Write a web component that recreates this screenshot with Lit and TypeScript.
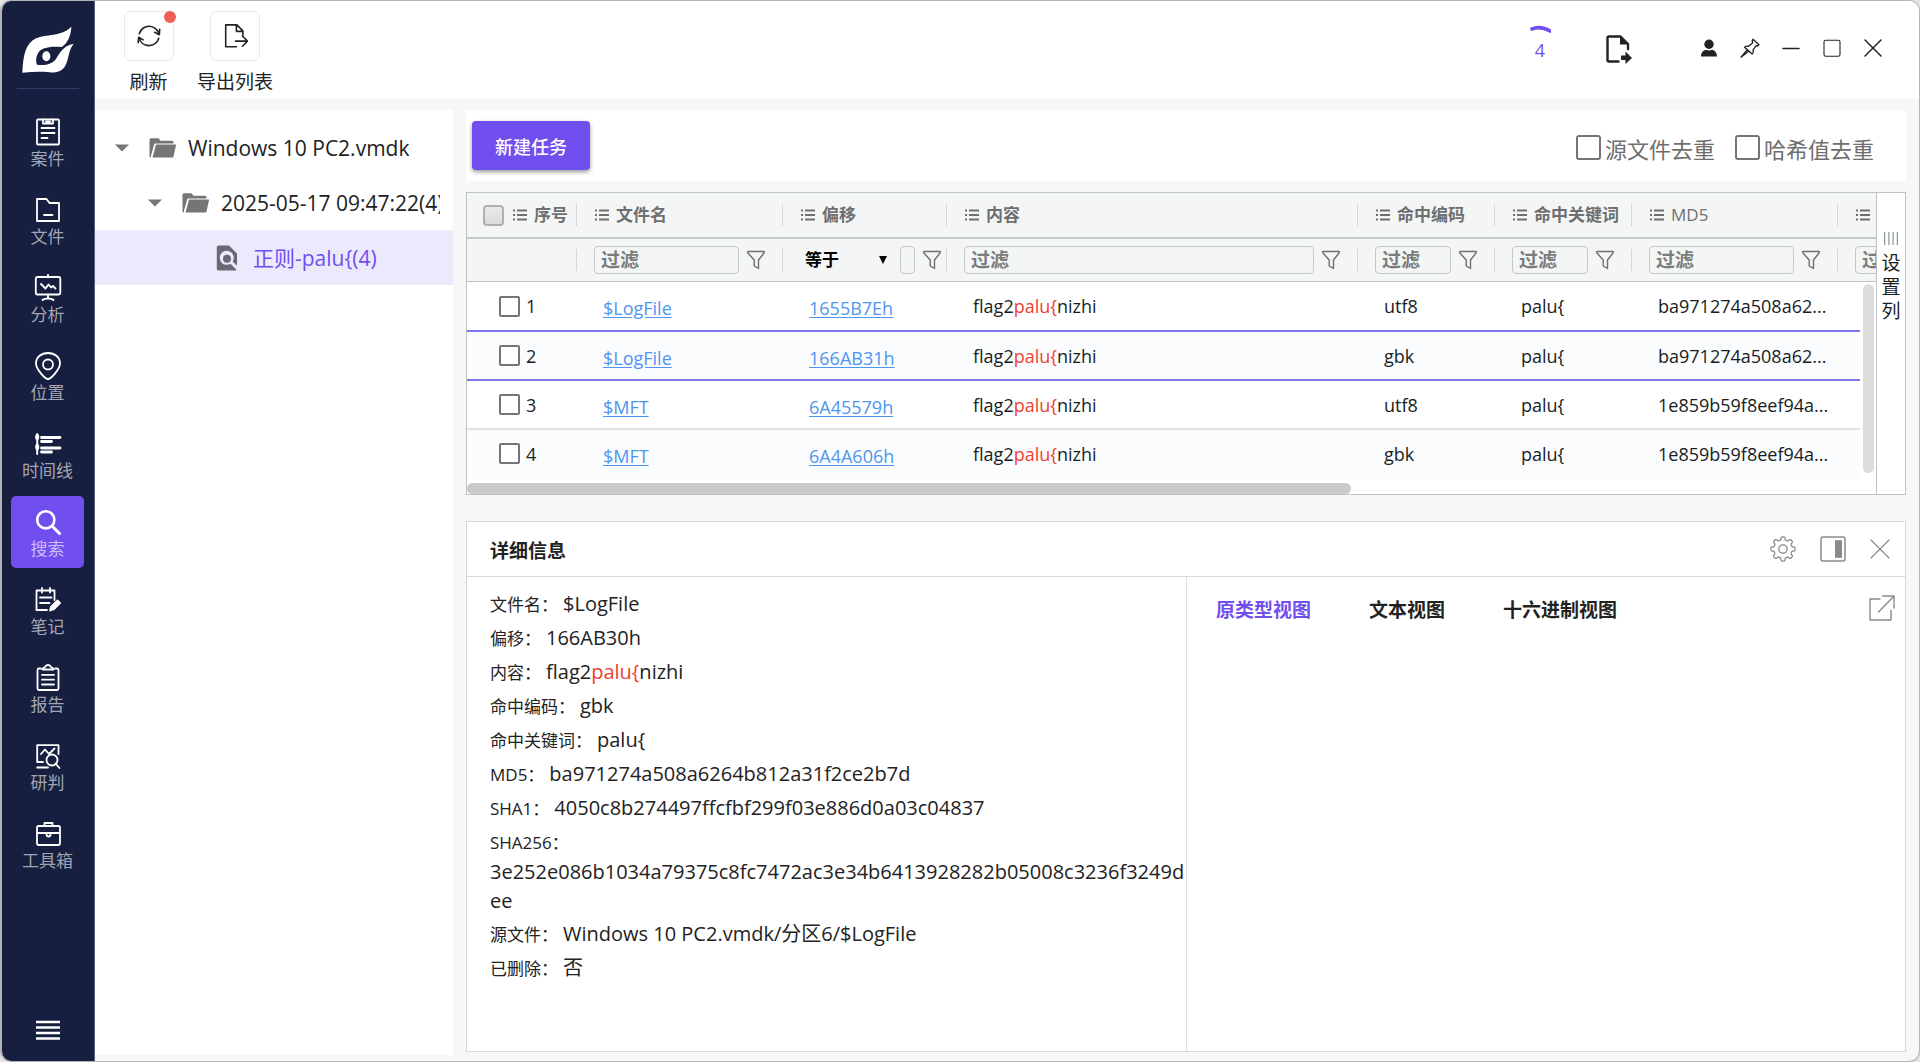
import { LitElement, html, css, svg, nothing } from "lit";
import { customElement, property, state } from "lit/decorators.js";
import { classMap } from "lit/directives/class-map.js";

/* Outline of an eight-toothed cog with soft corners, centred in a 26px box. */
const cogOutline = (() => {
  const steps = 160;
  const points: string[] = [];
  for (let i = 0; i < steps; i++) {
    const a = (i / steps) * Math.PI * 2;
    const r = 10.6 + 1.5 * Math.tanh(2.5 * Math.cos(8 * a));
    points.push(`${(13 + r * Math.cos(a)).toFixed(2)} ${(13 + r * Math.sin(a)).toFixed(2)}`);
  }
  return `M${points.join("L")}Z`;
})();

const iconDefs: Record<string, { box: string; body: unknown }> = {
  case: {
    box: "0 0 28 28",
    body: svg`<rect x="3" y="1.5" width="22" height="25" rx="1"/><path d="M9 1.5v4h10v-4M12 3.5h4M7.5 10h13M7.5 15h13M7.5 20h6" />`,
  },
  folder: {
    box: "0 0 28 28",
    body: svg`<path d="M3 3h9.500l3 4H25v18H3zM10 19h8.500"/>`,
  },
  analysis: {
    box: "0 0 28 28",
    body: svg`<rect x="1.800" y="3" width="24.500" height="17.500" rx="1.500"/><path d="M14 .8v2M14 20.500v4M8.500 26c2-2 9-2 11 0M7 10l4.500 4.500 3-4 2.500 3 2-1.500 2.500 2.500"/>`,
  },
  place: {
    box: "0 0 28 28",
    body: svg`<path d="M14 27C11 27 2 17 2 11.500 2 5 7.500 1 14 1s12 4 12 10.500C26 17 17 27 14 27z"/><circle cx="14" cy="12.500" r="5"/>`,
  },
  timeline: {
    box: "0 0 28 28",
    body: svg`<path d="M3.200 4v20" stroke-width="2"/><path d="M3.200 6v2M3.200 16v2" stroke-width="4"/><path d="M7.500 7.500H26M7.500 11.500H17.500M7.500 18H26M7.500 22H17.500" stroke-width="2.800"/>`,
  },
  search: {
    box: "0 0 28 28",
    body: svg`<circle cx="11.800" cy="11.800" r="8.600" stroke-width="2.600"/><path d="M18 18l7.500 7.500" stroke-width="3"/>`,
  },
  note: {
    box: "0 0 28 28",
    body: svg`<path d="M20.500 14V4.500h-18V24H13M8 2v4.500M16 2v4.500M6 11.500h11.500M6 17h9.500"/><path d="M16 24.500l1-3.500 6.500-6.500 2.500 2.500-6.500 6.500z" fill="currentColor"/>`,
  },
  report: {
    box: "0 0 28 28",
    body: svg`<path d="M7 4.500H5A1.500 1.500 0 0 0 3.500 6v18.500A1.500 1.500 0 0 0 5 26h18a1.500 1.500 0 0 0 1.500-1.500V6A1.500 1.500 0 0 0 23 4.500h-2M8.500 5.500h11c-.5-2-2-2.500-2.700-2.700C16 1.500 15 1 14 1s-2 .5-2.800 1.800C10.500 3 9 3.500 8.500 5.500zM8 10.800h12M8 15.700h12M8 20.500h12"/>`,
  },
  judge: {
    box: "0 0 28 28",
    body: svg`<path d="M24.500 12V3.200H3.200V20H9M3.200 25.500H14M7 12l4-4.500 4 4.500 5.500-5.500"/><circle cx="18" cy="18" r="5.500"/><path d="M21.500 21.500l4 4.500"/>`,
  },
  toolbox: {
    box: "0 0 28 28",
    body: svg`<rect x="3" y="6" width="23" height="19" rx="1.500"/><path d="M10.500 6V3h8v3M3 13h23M12.500 13v1.500a2 2 0 0 0 4 0V13"/>`,
  },
  menu: {
    box: "0 0 28 28",
    body: svg`<path d="M2 5H26M2 10.500H26M2 16H26M2 21.500H26" stroke-width="2.600" stroke-linecap="butt"/>`,
  },
  refresh: {
    box: "0 0 28 28",
    body: svg`<path d="M3.500 11.500A11 11 0 0 1 24.800 12M24.500 16.500A11 11 0 0 1 3.300 16M25.500 6.800l-.4 5.800-5-2.600M2.400 21.200l.5-5.800 4.800 2.800" stroke-width="1.800"/>`,
  },
  exportList: {
    box: "0 0 28 28",
    body: svg`<path d="M15.500 25.500H4V2H16l6.500 6.500v5M15.500 2.500V9h6.500M14.500 19.500H27M22 14l5.500 5.500L22 25" stroke-width="1.700"/>`,
  },
  exportFile: {
    box: "0 0 28 30",
    body: svg`<path d="M13.500 27.500H4a1.500 1.500 0 0 1-1.500-1.500V4A1.500 1.500 0 0 1 4 2.500h11.500l7.500 7.500v5" stroke-width="2.400"/><path d="M15 2l8.500 8.500H15zM16 21.500h4.500V17.500L27 24l-6.500 6v-4H16z" fill="currentColor" stroke="none"/>`,
  },
  user: {
    box: "0 0 20 20",
    body: svg`<circle cx="10" cy="6.200" r="4.700" fill="currentColor" stroke="none"/><path d="M2 18.500c0-4 2.500-6.200 5-6.700 1.500 1 4.500 1 6 0 2.500.5 5 2.700 5 6.700z" fill="currentColor" stroke="none"/>`,
  },
  pin: {
    box: "0 0 20 20",
    body: svg`<path d="M13 1.200l6 5.600-1.500 1.200-1.200-.3-3.300 4.200c.6 1.600.3 3-.8 4.200L4.500 9.300c1-1 2.700-1.500 4.200-1l4-3.600-.5-1.600zM7.500 11.500L1 19.200l8-6.200" stroke-width="1.300"/>`,
  },
  minimize: { box: "0 0 20 20", body: svg`<path d="M2 10.500h16" stroke-width="1.600"/>` },
  maximize: { box: "0 0 20 20", body: svg`<rect x="2" y="2.200" width="16" height="16" rx="1.800" stroke-width="1.100"/>` },
  close: { box: "0 0 20 20", body: svg`<path d="M2 2l16 16M18 2L2 18" stroke-width="1.500"/>` },
  closeThin: { box: "0 0 20 20", body: svg`<path d="M1 1l18 18M19 1L1 19" stroke-width="1.200"/>` },
  caret: { box: "0 0 14 8", body: svg`<path d="M0 .5h14L7 7.500z" fill="currentColor" stroke="none"/>` },
  folderOpen: {
    box: "0 0 28 22",
    body: svg`<path d="M3 20.500a1.500 1.500 0 0 1-1.500-1.500V2.800A1.600 1.600 0 0 1 3 1.200h7.500l2 2.500H24a1.500 1.500 0 0 1 1.500 1.500v1.300H6.500L3 18.500z" fill="currentColor" stroke="none"/><path d="M8 7.500h19.500a.6.600 0 0 1 .5.800l-2.600 11.400a1.200 1.200 0 0 1-1.200.9H4.500z" fill="currentColor" stroke="none"/>`,
  },
  fileSearch: {
    box: "0 0 22 26",
    body: svg`<path fill-rule="evenodd" d="M2.500.5H13l8 8v12.300l-4.300-4.300a7 7 0 1 0-2.200 2.200l6 6-.8.8H2.500A1.800 1.800 0 0 1 .8 23.700V2.300A1.800 1.800 0 0 1 2.500.5zM11 9.800a4 4 0 1 1 0 8 4 4 0 0 1 0-8z" fill="currentColor" stroke="none"/>`,
  },
  columnMenu: {
    box: "0 0 14 12",
    body: svg`<path d="M4 1.500h10M4 6h10M4 10.500h10M0 1.500h2M0 6h2M0 10.500h2" stroke-width="1.800" stroke-linecap="butt"/>`,
  },
  funnel: {
    box: "0 0 18 20",
    body: svg`<path d="M.8 1.500h16.400v1.300L11.500 10v8.500L7.200 16v-6L.8 2.800z" stroke-width="1.400"/>`,
  },
  bars: { box: "0 0 14 13", body: svg`<path d="M.7 0v13M4.900 0v13M9.100 0v13M13.300 0v13" stroke-width="1.100"/>` },
  gear: {
    box: "0 0 26 26",
    body: svg`<circle cx="13" cy="13" r="4.200" stroke-width="1.300"/><path d=${cogOutline} stroke-width="1.300"/>`,
  },
  dock: {
    box: "0 0 26 26",
    body: svg`<rect x="1" y="1" width="24" height="24" rx="2" stroke-width="1.500"/><path d="M15 4.200h7v17.600h-7z" fill="currentColor" stroke="none"/>`,
  },
  popout: {
    box: "0 0 26 26",
    body: svg`<path d="M11 4H1v21h21V15.500M13.500 1H25v12M25 1L9.500 17" stroke-width="1.400"/>`,
  },
};

@customElement("ui-icon")
class UiIcon extends LitElement {
  static styles = css`
    :host { display: inline-flex; flex: none; }
    .glyph { display: block; width: 100%; height: 100%; }
  `;
  @property() name = "";
  render() {
    const def = iconDefs[this.name];
    if (!def) return nothing;
    return html`<svg class="glyph" viewBox=${def.box} fill="none" stroke="currentColor" stroke-width="1.800" stroke-linecap="round" stroke-linejoin="round" aria-hidden="true">${def.body}</svg>`;
  }
}

@customElement("app-rail")
class AppRail extends LitElement {
  static styles = css`
    :host {
      display: flex; flex-direction: column; align-items: center; width: 93px; flex: none;
      box-sizing: border-box; background: #171f40; border-right: 1px solid #5b6179; padding: 0 1px 16px 0;
    }
    .logo { width: 54px; height: 48px; margin-top: 24px; }
    .rule { width: 62px; height: 1px; background: #333b6b; margin: 15px 0 17px; }
    .items { display: flex; flex-direction: column; gap: 6px; }
    .item {
      width: 73px; height: 72px; border: 0; border-radius: 5px; background: none; padding: 5px 0 0; cursor: pointer; box-sizing: border-box;
      display: flex; flex-direction: column; align-items: center; justify-content: center; gap: 1px;
      font: 17px/24px "Open Sans", "Noto Sans CJK SC", sans-serif; color: #a2a5b3;
    }
    .item ui-icon, .more ui-icon { width: 28px; height: 28px; color: #fff; }
    .item.active { background: #714eee; color: #c9bcf8; }
    .more { border: 0; padding: 0; background: none; margin-top: auto; display: flex; }
  `;
  @state() private active = "搜索";
  private items = [
    ["case", "案件"], ["folder", "文件"], ["analysis", "分析"], ["place", "位置"], ["timeline", "时间线"],
    ["search", "搜索"], ["note", "笔记"], ["report", "报告"], ["judge", "研判"], ["toolbox", "工具箱"],
  ];
  render() {
    return html`
      <svg class="logo" viewBox="63 72 162 144" aria-hidden="true">
        <path fill="#fff" fill-rule="evenodd" d="M67 215C69 165 76 127 108 112C138 98 184 108 214 77C213 104 202 128 185 138C158 135 128 138 117 152C106 166 108 184 111 191C134 195 156 190 168 174C180 154 190 134 221 128C204 148 207 178 194 197C184 211 170 215 148 214C120 211 95 213 67 215Z"/>
        <ellipse cx="139" cy="166" rx="12" ry="15" fill="#fff"/>
      </svg>
      <div class="rule"></div>
      <nav class="items">
        ${this.items.map(([icon, label]) => html`
          <button class=${classMap({ item: true, active: this.active === label })} @click=${() => (this.active = label)}>
            <ui-icon name=${icon}></ui-icon><span>${label}</span>
          </button>`)}
      </nav>
      <button class="more" aria-label="菜单"><ui-icon name="menu"></ui-icon></button>
    `;
  }
}

@customElement("app-header")
class AppHeader extends LitElement {
  static styles = css`
    :host { display: flex; justify-content: space-between; background: #fff; height: 98px; box-sizing: border-box; padding: 10px 36px 0 23px; }
    .tools { display: flex; gap: 18px; }
    .tool {
      border: 0; padding: 0; background: none; display: flex; flex-direction: column; align-items: center; gap: 8px;
      min-width: 61px; font: 19px/26px "Open Sans", "Noto Sans CJK SC", sans-serif; color: #222;
    }
    .frame { position: relative; display: flex; align-items: center; justify-content: center; box-sizing: border-box; width: 50px; height: 50px; border: 1px solid #e9e9e9; border-radius: 6px; }
    .frame ui-icon { width: 26px; height: 26px; }
    .dot { position: absolute; top: -1px; right: -3px; width: 12px; height: 12px; border-radius: 50%; background: #ee5f56; }
    .status { display: flex; align-items: flex-start; color: #222; }
    .queue { display: flex; flex-direction: column; align-items: center; width: 24px; margin: 14px 53px 0 0; color: #714eee; font: 18px/24px "Open Sans", sans-serif; }
    .arc { width: 22px; height: 10px; margin-bottom: 3px; }
    .win { border: 0; padding: 0; background: none; display: flex; color: inherit; margin: 27px 0 0 21px; }
    .win ui-icon { width: 20px; height: 20px; }
    .win.file { margin: 23px 45px 0 0; }
    .win.file ui-icon { width: 28px; height: 30px; }
  `;
  render() {
    const wins = [["user", "用户"], ["pin", "置顶"], ["minimize", "最小化"], ["maximize", "最大化"], ["close", "关闭"]];
    return html`
      <div class="tools">
        <button class="tool"><span class="frame"><ui-icon name="refresh"></ui-icon><i class="dot"></i></span>刷新</button>
        <button class="tool"><span class="frame"><ui-icon name="exportList"></ui-icon></span>导出列表</button>
      </div>
      <div class="status">
        <div class="queue">
          <svg class="arc" viewBox="0 0 22 10" aria-hidden="true"><path d="M3 4C9 1.500 15 2.500 21 6" fill="none" stroke="#714eee" stroke-width="3.600" stroke-linecap="round"/></svg>
          4
        </div>
        <button class="win file" aria-label="导出"><ui-icon name="exportFile"></ui-icon></button>
        ${wins.map(([i, l]) => html`<button class="win" aria-label=${l}><ui-icon name=${i}></ui-icon></button>`)}
      </div>
    `;
  }
}

@customElement("task-tree")
class TaskTree extends LitElement {
  static styles = css`
    :host { display: block; width: 358px; flex: none; background: #fff; padding-top: 10px; box-sizing: border-box; overflow: hidden; }
    .tree { list-style: none; margin: 0; padding: 0; }
    .node {
      display: flex; align-items: center; width: 100%; height: 55px; box-sizing: border-box; border: 0; background: none; padding: 0 13px 0 20px;
      font: 21px/28px "Open Sans", "Noto Sans CJK SC", sans-serif; color: #222; text-align: left;
    }
    .node.l2 { padding-left: 53px; }
    .node.l3 { padding-left: 121px; background: #ece9fc; color: #714eee; }
    .caret { width: 14px; height: 8px; color: #757575; margin-right: 19px; }
    .folder { width: 28px; height: 22px; color: #757575; margin-right: 12px; }
    .file { width: 22px; height: 26px; color: #6b6873; margin-right: 15px; }
    .name { overflow: hidden; white-space: nowrap; }
  `;
  render() {
    return html`
      <ul class="tree">
        <li><button class="node"><ui-icon class="caret" name="caret"></ui-icon><ui-icon class="folder" name="folderOpen"></ui-icon><span class="name">Windows 10 PC2.vmdk</span></button></li>
        <li><button class="node l2"><ui-icon class="caret" name="caret"></ui-icon><ui-icon class="folder" name="folderOpen"></ui-icon><span class="name">2025-05-17 09:47:22(4)</span></button></li>
        <li><button class="node l3"><ui-icon class="file" name="fileSearch"></ui-icon><span class="name">正则-palu{(4)</span></button></li>
      </ul>
    `;
  }
}

interface Hit { file: string; offset: string; enc: string; md5: string; }

@customElement("hit-grid")
class HitGrid extends LitElement {
  static styles = css`
    :host { display: flex; border: 1px solid #bdc3c7; background: #fff; box-sizing: border-box; height: 303px; font: 17px/24px "Open Sans", "Noto Sans CJK SC", sans-serif; color: #181d1f; }
    .view { position: relative; flex: 1; min-width: 0; overflow: hidden; }
    .grid { border-collapse: separate; border-spacing: 0; table-layout: fixed; width: 1612px; }
    .c-no { width: 110px; } .c-file { width: 206px; } .c-off { width: 164px; } .c-text { width: 411px; } .c-key { width: 137px; } .c-md5 { width: 206px; } .c-sha { width: 241px; }
    th { padding: 0; background: #f4f6f6; color: #6d6f70; font-weight: 700; text-align: left; }
    .heads th { height: 44px; border-bottom: 2px solid #c5cacd; }
    .filters th { height: 42px; border-bottom: 1px solid #bdc3c7; }
    .cell { display: flex; align-items: center; height: 22px; padding-left: 18px; gap: 7px; border-right: 1px solid #d3d6d8; white-space: nowrap; line-height: 22px; }
    .cell.first { padding-left: 16px; }
    .cell.latin { font-weight: 400; }
    .cell ui-icon { width: 14px; height: 12px; }
    .cell .funnel { width: 18px; height: 20px; }
    .filter { padding-left: 17px; padding-right: 17px; gap: 8px; }
    .filter.offset { padding-right: 5px; }
    .filter input {
      flex: 1; min-width: 0; width: 0; height: 28px; box-sizing: border-box; border: 1px solid #c3c8ca; border-radius: 4px; background: transparent;
      padding: 0 6px; font: 700 19px/24px "Open Sans", "Noto Sans CJK SC", sans-serif; color: #333;
    }
    .filter input::placeholder { color: #7a7c7d; opacity: 1; }
    .pick { position: relative; display: flex; align-items: center; flex: none; width: 92px; }
    .pick select { appearance: none; width: 100%; border: 0; background: none; padding: 0 20px 0 5px; font: 700 17px/24px "Open Sans", "Noto Sans CJK SC", sans-serif; color: #000; }
    .pick::after { content: ""; position: absolute; right: 5px; border: 4px solid transparent; border-top: 8px solid #000; border-bottom: 0; pointer-events: none; }
    .check { appearance: none; flex: none; width: 21px; height: 21px; margin: 0; box-sizing: border-box; border: 2px solid #757575; border-radius: 2px; background: #fff; }
    .check.all { border: 2px solid #aeb1b2; border-radius: 4px; background: linear-gradient(#e9e9e9, #dcdcdc); margin-right: 2px; }
    td { height: 47px; padding: 0 8px 0 26px; border-bottom: 2px solid #e0e2e4; white-space: nowrap; font-size: 18px; }
    td.no { padding: 0 0 0 32px; }
    .index { display: flex; align-items: center; gap: 6px; }
    tbody tr:nth-child(even) td { background: #fbfcfe; }
    tbody tr.above td { height: 48px; }
    tbody tr.above td, tbody tr.chosen td { border-bottom-color: #8078ea; }
    tbody tr:last-child td { border-bottom-color: transparent; }
    .link { color: #4f95f0; display: inline-block; padding-top: 4px; text-underline-offset: 2px; }
    .hit { color: #f0402e; }
    .vtrack { position: absolute; top: 89px; right: 0; bottom: 0; width: 16px; background: #fff; }
    .vthumb { width: 11px; height: 189px; margin: 2px auto 0; border-radius: 6px; background: #dcdcdc; }
    .hthumb { position: absolute; left: 0; bottom: 0; width: calc(63% - 4px); height: 11px; border-radius: 6px; background: #cacaca; }
    .side { width: 29px; flex: none; box-sizing: border-box; border: 0; border-left: 1px solid #bdc3c7; background: #fff; padding: 39px 4px 0; display: flex; flex-direction: column; align-items: center; gap: 5px; font: 19px/24px "Noto Sans CJK SC", sans-serif; color: #181d1f; }
    .side ui-icon { width: 14px; height: 13px; color: #7f8c8d; }
    .side span { width: 19px; white-space: normal; word-break: break-all; }
  `;
  private rows: Hit[] = [
    { file: "$LogFile", offset: "1655B7Eh", enc: "utf8", md5: "ba971274a508a62..." },
    { file: "$LogFile", offset: "166AB31h", enc: "gbk", md5: "ba971274a508a62..." },
    { file: "$MFT", offset: "6A45579h", enc: "utf8", md5: "1e859b59f8eef94a..." },
    { file: "$MFT", offset: "6A4A606h", enc: "gbk", md5: "1e859b59f8eef94a..." },
  ];
  private head(label: string) {
    return html`<th><div class=${classMap({ cell: true, latin: label === "MD5" })}><ui-icon name="columnMenu"></ui-icon>${label}</div></th>`;
  }
  private filter(label: string) {
    return html`<th><div class="cell filter"><input placeholder="过滤" aria-label=${label} /><ui-icon class="funnel" name="funnel"></ui-icon></div></th>`;
  }
  render() {
    const labels = ["命中编码", "命中关键词", "MD5", ""];
    return html`
      <div class="view">
        <table class="grid">
          <colgroup><col class="c-no" /><col class="c-file" /><col class="c-off" /><col class="c-text" /><col class="c-key" /><col class="c-key" /><col class="c-md5" /><col class="c-sha" /></colgroup>
          <thead>
            <tr class="heads">
              <th><div class="cell first"><input class="check all" type="checkbox" aria-label="全选" /><ui-icon name="columnMenu"></ui-icon>序号</div></th>
              ${["文件名", "偏移", "内容", ...labels].map((l) => this.head(l))}
            </tr>
            <tr class="filters">
              <th><div class="cell"></div></th>
              ${this.filter("文件名")}
              <th><div class="cell filter offset">
                <span class="pick"><select aria-label="偏移条件"><option>等于</option></select></span>
                <input aria-label="偏移" /><ui-icon class="funnel" name="funnel"></ui-icon>
              </div></th>
              ${["内容", ...labels].map((l) => this.filter(l || "SHA1"))}
            </tr>
          </thead>
          <tbody>
            ${this.rows.map((r, i) => html`
              <tr class=${classMap({ above: i === 0, chosen: i === 1 })}>
                <td class="no"><label class="index"><input class="check" type="checkbox" />${i + 1}</label></td>
                <td><a class="link" href="#">${r.file}</a></td>
                <td><a class="link" href="#">${r.offset}</a></td>
                <td>flag2<span class="hit">palu{</span>nizhi</td>
                <td>${r.enc}</td>
                <td>palu{</td>
                <td>${r.md5}</td>
                <td></td>
              </tr>`)}
          </tbody>
        </table>
        <div class="vtrack"><div class="vthumb"></div></div>
        <div class="hthumb"></div>
      </div>
      <button class="side"><ui-icon name="bars"></ui-icon><span>设置列</span></button>
    `;
  }
}

@customElement("detail-panel")
class DetailPanel extends LitElement {
  static styles = css`
    :host { display: flex; flex-direction: column; flex: 1; min-height: 0; box-sizing: border-box; border: 1px solid #d6d6d6; background: #fff; color: #222; font: 20px/29px "Open Sans", "Noto Sans CJK SC", sans-serif; }
    .bar { display: flex; align-items: center; justify-content: space-between; height: 54px; flex: none; border-bottom: 1px solid #d9d9d9; padding: 0 15px 0 23px; }
    .title { margin: 0; padding-top: 4px; font-size: 19px; font-weight: 700; }
    .acts { display: flex; align-items: center; gap: 24px; }
    .act { display: flex; border: 0; padding: 0; background: none; color: #8a8a8a; }
    .act ui-icon { width: 26px; height: 26px; }
    .act.x ui-icon { width: 20px; height: 20px; }
    .body { display: grid; grid-template-columns: 720px 1fr; flex: 1; min-height: 0; }
    .facts { margin: 0; padding: 12px 0 12px 23px; display: flex; flex-direction: column; gap: 4px; border-right: 1px solid #dedede; }
    .fact { overflow-wrap: break-word; }
    .fact dt, .fact dd { display: inline; margin: 0; }
    .fact dt { font-size: 17px; margin-right: 5px; }
    .hit { color: #f0402e; }
    .tabs { display: flex; align-items: flex-start; align-self: start; gap: 58px; padding: 18px 10px 0 29px; }
    .tab { border: 0; padding: 1px 0 0; background: none; font: 700 19px/29px "Open Sans", "Noto Sans CJK SC", sans-serif; color: #222; }
    .tab.on { color: #714eee; }
    .pop { margin-left: auto; }
  `;
  render() {
    const facts: [string, unknown][] = [
      ["文件名", "$LogFile"], ["偏移", "166AB30h"], ["内容", html`flag2<span class="hit">palu{</span>nizhi`],
      ["命中编码", "gbk"], ["命中关键词", "palu{"], ["MD5", "ba971274a508a6264b812a31f2ce2b7d"],
      ["SHA1", "4050c8b274497ffcfbf299f03e886d0a03c04837"],
      ["SHA256", "3e252e086b1034a79375c8fc7472ac3e34b6413928282b05008c3236f3249dee"],
      ["源文件", "Windows 10 PC2.vmdk/分区6/$LogFile"], ["已删除", "否"],
    ];
    return html`
      <div class="bar">
        <h2 class="title">详细信息</h2>
        <div class="acts">
          <button class="act" aria-label="设置"><ui-icon name="gear"></ui-icon></button>
          <button class="act" aria-label="布局"><ui-icon name="dock"></ui-icon></button>
          <button class="act x" aria-label="关闭"><ui-icon name="closeThin"></ui-icon></button>
        </div>
      </div>
      <div class="body">
        <dl class="facts">${facts.map(([k, v]) => html`<div class="fact"><dt>${k}：</dt><wbr /><dd>${v}</dd></div>`)}</dl>
        <div class="tabs">
          <button class="tab on">原类型视图</button><button class="tab">文本视图</button><button class="tab">十六进制视图</button>
          <button class="act pop" aria-label="弹出"><ui-icon name="popout"></ui-icon></button>
        </div>
      </div>
    `;
  }
}

@customElement("app-root")
class AppRoot extends LitElement {
  static styles = css`
    :host { display: block; height: 100vh; box-sizing: border-box; background: #e4e4e4; font-family: "Open Sans", "Noto Sans CJK SC", sans-serif; }
    .window { display: flex; height: 100%; box-sizing: border-box; border: 1px solid #b4b4b4; border-left-width: 2px; border-radius: 11px; overflow: hidden; background: #f7f7f7; }
    .main { flex: 1; min-width: 0; display: flex; flex-direction: column; }
    .content { flex: 1; min-height: 0; display: flex; gap: 13px; padding: 11px 13px 6px 0; }
    .work { flex: 1; min-width: 0; display: flex; flex-direction: column; padding-bottom: 3px; }
    .toolbar { display: flex; align-items: center; justify-content: space-between; background: #fff; height: 71px; flex: none; margin-bottom: 11px; box-sizing: border-box; padding: 0 32px 0 6px; }
    .create { height: 49px; padding: 0 23px; border: 0; border-radius: 4px; background: #714eee; color: #fff; font: 500 18px/24px "Noto Sans CJK SC", sans-serif; box-shadow: 0 2px 4px rgba(0, 0, 0, 0.4); }
    .dedupe { display: flex; gap: 20px; padding-top: 4px; }
    .opt { display: flex; align-items: center; gap: 4px; font: 22px/30px "Noto Sans CJK SC", sans-serif; color: #6e6e6e; }
    .opt input { appearance: none; width: 25px; height: 25px; margin: 0; box-sizing: border-box; border: 2px solid #757575; border-radius: 3px; }
    hit-grid { margin-bottom: 26px; flex: none; }
  `;
  render() {
    return html`
      <div class="window">
        <app-rail></app-rail>
        <div class="main">
          <app-header></app-header>
          <div class="content">
            <task-tree></task-tree>
            <div class="work">
              <div class="toolbar">
                <button class="create">新建任务</button>
                <div class="dedupe">
                  <label class="opt"><input type="checkbox" />源文件去重</label>
                  <label class="opt"><input type="checkbox" />哈希值去重</label>
                </div>
              </div>
              <hit-grid></hit-grid>
              <detail-panel></detail-panel>
            </div>
          </div>
        </div>
      </div>
    `;
  }
}
